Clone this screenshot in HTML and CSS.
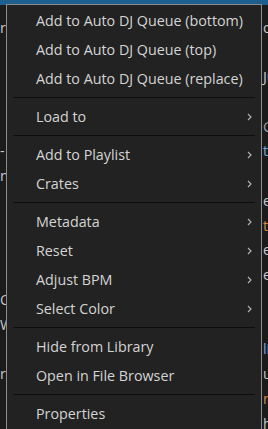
FILE: index.html
```html
<!DOCTYPE html>
<html lang="en">
<head>
  <meta charset="UTF-8">
  <meta name="viewport" content="width=device-width, initial-scale=1.0">
  <title>Track Menu</title>
  <link rel="stylesheet" href="styles.css">
</head>
<body>
  <div class="library">
    <div class="row selected"><span>rama</span><span>Love the Way</span></div>
    <div class="gap"></div>
    <div class="row"><span>rock</span><span>oo</span></div>
    <div class="row"><span></span><span></span></div>
    <div class="row"><span></span><span>Jump</span></div>
    <div class="row"><span></span><span></span></div>
    <div class="row"><span></span><span class="dim">Go</span></div>
    <div class="row"><span>- </span><span class="blue">the</span></div>
    <div class="row"><span>n</span><span></span></div>
    <div class="row"><span></span><span>eve</span></div>
    <div class="row"><span></span><span class="orange">try</span></div>
    <div class="row"><span></span><span>en</span></div>
    <div class="row"><span></span><span>ex</span></div>
    <div class="row"><span>O</span><span></span></div>
    <div class="row"><span>W</span><span></span></div>
    <div class="row"><span></span><span class="blue">lim</span></div>
    <div class="row"><span>r</span><span>ub</span></div>
    <div class="row"><span></span><span class="orange">no</span></div>
    <div class="row"><span></span><span>ha</span></div>
  </div>

  <div class="menu">
    <div class="item">Add to Auto DJ Queue (bottom)</div>
    <div class="item">Add to Auto DJ Queue (top)</div>
    <div class="item">Add to Auto DJ Queue (replace)</div>
    <div class="sep"></div>
    <div class="item sub">Load to <svg class="arrow" viewBox="0 0 5 8"><polyline points="1,1 4,4 1,7"/></svg></div>
    <div class="sep"></div>
    <div class="item sub">Add to Playlist <svg class="arrow" viewBox="0 0 5 8"><polyline points="1,1 4,4 1,7"/></svg></div>
    <div class="item sub">Crates <svg class="arrow" viewBox="0 0 5 8"><polyline points="1,1 4,4 1,7"/></svg></div>
    <div class="sep"></div>
    <div class="item sub">Metadata <svg class="arrow" viewBox="0 0 5 8"><polyline points="1,1 4,4 1,7"/></svg></div>
    <div class="item sub">Reset <svg class="arrow" viewBox="0 0 5 8"><polyline points="1,1 4,4 1,7"/></svg></div>
    <div class="item sub">Adjust BPM <svg class="arrow" viewBox="0 0 5 8"><polyline points="1,1 4,4 1,7"/></svg></div>
    <div class="item sub">Select Color <svg class="arrow" viewBox="0 0 5 8"><polyline points="1,1 4,4 1,7"/></svg></div>
    <div class="sep"></div>
    <div class="item">Hide from Library</div>
    <div class="item">Open in File Browser</div>
    <div class="sep"></div>
    <div class="item">Properties</div>
    <div class="item">Delete</div>
  </div>
</body>
</html>
```

FILE: styles.css
```css
body {
  margin: 0;
  padding: 0;
  height: 429px;
  overflow: hidden;
  position: relative;
  background: #1b1b1b;
  font-family: "Open Sans", "Noto Sans", sans-serif;
  font-size: 14.3px;
}

/* library table behind the menu */
.library {
  margin-top: -15px;
}

.row {
  display: grid;
  grid-template-columns: 263px 1fr;
  height: 24.75px;
  line-height: 24.75px;
  color: #c8c8c8;
  white-space: nowrap;
  overflow: hidden;
}

.row.selected {
  height: 20px;
  line-height: 20px;
  background: #1d5f8f;
  color: #ffffff;
}

.gap {
  height: 10.6px;
}

.dim {
  color: #a0a0a0;
}

.blue {
  color: #6fa8dc;
}

.orange {
  color: #d08a40;
}

/* context menu */
.menu {
  position: absolute;
  left: 6px;
  top: 4px;
  width: 254px;
  padding-top: 1px;
  background: #222222;
  border: 1px solid #8c8c8c;
  color: #d4d4d4;
}

.item {
  display: flex;
  align-items: center;
  justify-content: space-between;
  height: 29px;
  padding: 0 9px 0 29px;
  white-space: nowrap;
}

.arrow {
  width: 5px;
  height: 8px;
  fill: none;
  stroke: #b0b0b0;
  stroke-width: 1.2;
}

.sep {
  height: 1px;
  margin: 4px 6px;
  background: #0e0e0e;
}
```
